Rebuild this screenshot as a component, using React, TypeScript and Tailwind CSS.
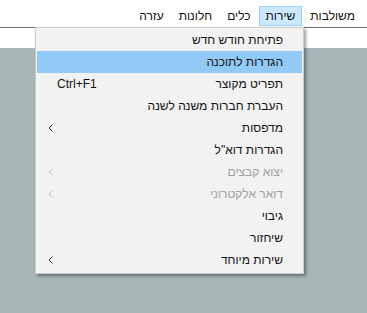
const menuBar = [
    { label: "משולבות", active: false },
    { label: "שירות", active: true },
    { label: "כלים", active: false },
    { label: "חלונות", active: false },
    { label: "עזרה", active: false },
];

type Item = {
    label: string;
    shortcut?: string;
    sub?: boolean;
    disabled?: boolean;
    active?: boolean;
};

const items: Item[] = [
    { label: "פתיחת חודש חדש" },
    { label: "הגדרות לתוכנה", active: true },
    { label: "תפריט מקוצר", shortcut: "Ctrl+F1" },
    { label: "העברת חברות משנה לשנה" },
    { label: "מדפסות", sub: true },
    { label: "הגדרות דוא\"ל" },
    { label: "יצוא קבצים", sub: true, disabled: true },
    { label: "דואר אלקטרוני", sub: true, disabled: true },
    { label: "גיבוי" },
    { label: "שיחזור" },
    { label: "שירות מיוחד", sub: true },
];

function Chevron({ disabled }: { disabled?: boolean }) {
    return (
        <svg width="5" height="8" viewBox="0 0 5 8" className="block">
            <path
                d="M4.5 0.5 L1 4 L4.5 7.5"
                fill="none"
                stroke={disabled ? "#bdbdbd" : "#333333"}
                strokeWidth="1"
            />
        </svg>
    );
}

export default function App() {
    return (
        <div className="relative w-[367px] h-[313px] overflow-hidden bg-[#a9b6b6] font-['Liberation_Sans','DejaVu_Sans',sans-serif] text-[12px] text-[#111]">

            {/* Menu bar */}

            <div dir="rtl" className="flex h-[27px] items-start gap-[1px] bg-white pt-[6px] pr-[5px]">
                {menuBar.map((m) => (
                    <div
                        key={m.label}
                        className={
                            m.active
                                ? "h-[20px] border border-[#99d1ff] bg-[#cce8ff] px-[6px] leading-[18px]"
                                : "h-[20px] border border-transparent px-[6px] leading-[18px]"
                        }
                    >
                        {m.label}
                    </div>
                ))}
            </div>

            <div className="h-[1px] bg-[#6b6b6b]" />
            <div className="h-[20px] bg-white" />

            {/* Dropdown */}

            <div className="absolute left-[35px] top-[27px] w-[269px] border border-[#cccccc] bg-[#f2f2f2] pt-[1px] pb-[2px] shadow-[2px_2px_3px_rgba(0,0,0,0.4)]">
                {items.map((item) => (
                    <div
                        key={item.label}
                        className={
                            "mx-[1px] flex h-[22px] items-center " +
                            (item.active ? "bg-[#91c9f7]" : "")
                        }
                    >
                        <div className="flex w-[20px] shrink-0 items-center pl-[11px]">
                            {item.sub && <Chevron disabled={item.disabled} />}
                        </div>
                        <div className="flex-1">{item.shortcut}</div>
                        <div
                            dir="rtl"
                            className={
                                "pr-[19px] " +
                                (item.disabled ? "text-[#a0a0a0]" : "")
                            }
                        >
                            {item.label}
                        </div>
                    </div>
                ))}
            </div>

        </div>
    );
}
